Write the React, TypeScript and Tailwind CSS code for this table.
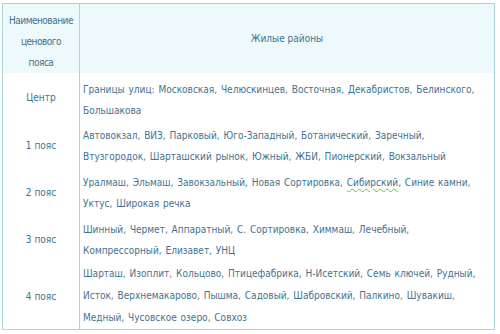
const rows: { zone: string; pad: string; lines: React.ReactNode[] }[] = [
  {
    zone: "Центр",
    pad: "pt-[6px] pb-[1px]",
    lines: [
      "Границы улиц: Московская, Челюскинцев, Восточная, Декабристов, Белинского,",
      "Большакова",
    ],
  },
  {
    zone: "1 пояс",
    pad: "py-[2.5px]",
    lines: [
      "Автовокзал, ВИЗ, Парковый, Юго-Западный, Ботанический, Заречный,",
      "Втузгородок, Шарташский рынок, Южный, ЖБИ, Пионерский, Вокзальный",
    ],
  },
  {
    zone: "2 пояс",
    pad: "py-[2.5px]",
    lines: [
      <>
        Уралмаш, Эльмаш, Завокзальный, Новая Сортировка,{" "}
        <span className="underline decoration-wavy decoration-[#6cc04a] underline-offset-2">Сибирский</span>, Синие камни,
      </>,
      "Уктус, Широкая речка",
    ],
  },
  {
    zone: "3 пояс",
    pad: "py-[2.5px]",
    lines: [
      "Шинный, Чермет, Аппаратный, С. Сортировка, Химмаш, Лечебный,",
      "Компрессорный, Елизавет, УНЦ",
    ],
  },
  {
    zone: "4 пояс",
    pad: "leading-[22px]",
    lines: [
      "Шарташ, Изоплит, Кольцово, Птицефабрика, Н-Исетский, Семь ключей, Рудный,",
      "Исток, Верхнемакарово, Пышма, Садовый, Шабровский, Палкино, Шувакиш,",
      "Медный, Чусовское озеро, Совхоз",
    ],
  },
];

export default function App() {
  return (
    <div className="w-[500px] h-[334px] bg-white pt-[3px] pl-[2px]">
      <div
        className="w-[493px] overflow-hidden border border-[#acd5d9] text-[10px] leading-[21px] text-[#44728e]"
        style={{ fontFamily: '"DejaVu Sans Condensed", "DejaVu Sans", Tahoma, sans-serif' }}
      >
        <div className="grid grid-cols-[77px_1fr] bg-[#edf9fa]">
          <div className="border-r border-[#acd5d9] pt-[6px] text-center tracking-[-0.5px]">
            Наименование
            <br />
            ценового
            <br />
            пояса
          </div>
          <div className="flex items-center justify-center">Жилые районы</div>
        </div>
        {rows.map((row) => (
          <div key={row.zone} className="grid grid-cols-[77px_1fr]">
            <div className="flex items-center justify-center border-r border-[#acd5d9]">{row.zone}</div>
            <div className={`min-w-0 pl-[3px] [word-spacing:1px] ${row.pad}`}>
              {row.lines.map((line, i) => (
                <div key={i} className="whitespace-nowrap">
                  {line}
                </div>
              ))}
            </div>
          </div>
        ))}
      </div>
    </div>
  );
}
